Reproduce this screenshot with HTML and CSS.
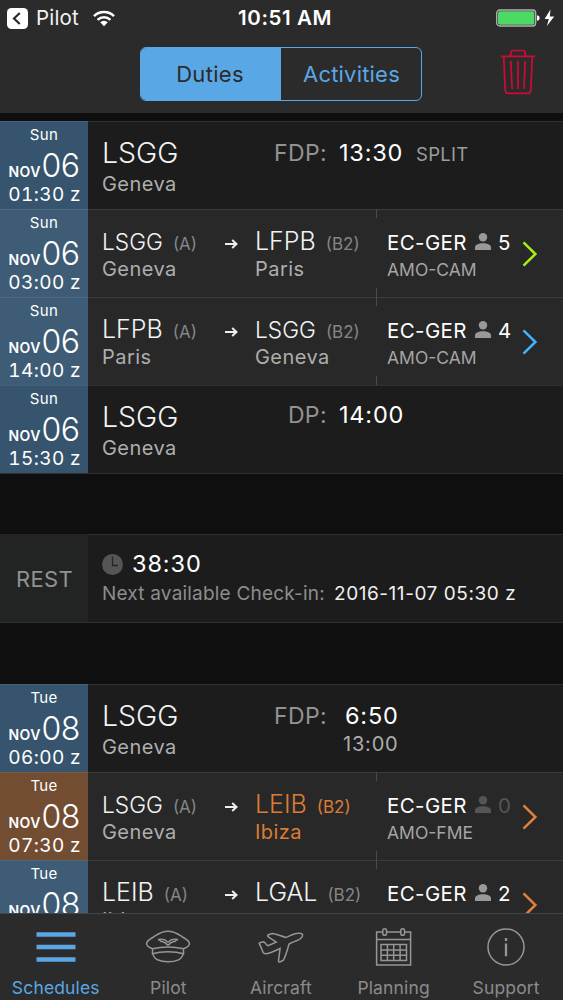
FILE: index.html
```html
<!DOCTYPE html>
<html lang="en">
<head>
<meta charset="utf-8">
<title>Duties</title>
<link rel="stylesheet" href="styles.css">
</head>
<body>
<svg class="defs" width="0" height="0">
  <symbol id="person" viewBox="0 0 16 17"><circle cx="8" cy="4.3" r="4.2"/><path d="M0 17v-2.600C0 11.600 4.500 10.300 8 10.300s8 1.300 8 4.100V17z"/></symbol>
  <symbol id="arrow" viewBox="0 0 13 10"><path d="M0 5h11M7.200 1l4.300 4-4.300 4" fill="none" stroke="currentColor" stroke-width="2"/></symbol>
  <symbol id="chevron" viewBox="0 0 16 26"><path d="M1.500 1.300 13.400 13 1.500 24.700" fill="none" stroke="currentColor" stroke-width="2.500"/></symbol>
</svg>
<div class="app">
  <header class="top">
    <div class="status">
      <div class="status-left">
        <svg class="back" width="21" height="21" viewBox="0 0 21 21"><rect width="21" height="21" rx="4.500" fill="#fff"/><path d="M12.800 5 7 10.500l5.800 5.500" fill="none" stroke="#2b2b2b" stroke-width="2.200"/></svg>
        <span class="back-label">Pilot</span>
        <svg class="wifi" width="22" height="17" viewBox="0 0 22 17"><g fill="none" stroke="#fff" stroke-width="2.500"><path d="M1 6.200a14.200 14.200 0 0 1 20 0"/><path d="M4.600 9.900a9.100 9.100 0 0 1 12.800 0"/></g><path d="M7.200 12.300a5.400 5.400 0 0 1 7.600 0L11 16.300z" fill="#fff"/></svg>
      </div>
      <div class="clock">10:51 AM</div>
      <svg class="battery" width="60" height="20" viewBox="0 0 60 20"><rect x=".7" y="2" width="39" height="16" rx="3" fill="none" stroke="#b5b0b5" stroke-width="1.300"/><rect x="2" y="3.300" width="36.400" height="13.400" rx="1.800" fill="#4cd964"/><path d="M41 7.200c2 .3 2.600 1.500 2.600 2.800s-.6 2.500-2.600 2.800z" fill="#fff"/><path d="M54.500 1.500 48.600 11h4.200l-1.900 7L58.200 8.400h-4.400z" fill="#fff"/></svg>
    </div>
    <div class="toolbar">
      <div class="segmented"><div class="segment active">Duties</div><div class="segment">Activities</div></div>
      <svg class="trash" width="34" height="46" viewBox="0 0 34 46" fill="none" stroke="#d00a35" stroke-width="1.700"><path d="M0 7.300h34M9.700 7V4.500c0-2 1-3 3-3h8.600c2 0 3 1 3 3V7M2.700 7.500l1.500 33.700c.1 2.100 1.200 3.200 3.200 3.200h19.200c2 0 3.100-1.100 3.200-3.200L31.300 7.500"/><path d="M9.800 12l1.300 28M17 12v28M24.200 12l-1.300 28"/></svg>
    </div>
  </header>

  <main class="list">
    <section class="group">
      <article class="row duty">
        <div class="date"><div class="day">Sun</div><div class="md"><b>NOV</b><span>06</span></div><div class="time">01:30 z</div></div>
        <div class="station"><div class="icao">LSGG</div><div class="city">Geneva</div></div>
        <div class="period"><div class="period-line"><span class="label">FDP:</span><span class="value">13:30</span><span class="split">SPLIT</span></div></div>
      </article>
      <article class="row leg">
        <div class="date"><div class="day">Sun</div><div class="md"><b>NOV</b><span>06</span></div><div class="time">03:00 z</div></div>
        <div class="from"><div class="code"><span class="icao small">LSGG</span><span class="blk">(A)</span></div><div class="city">Geneva</div></div>
        <svg class="arrow" width="13" height="10"><use href="#arrow"/></svg>
        <div class="to"><div class="code"><span class="icao">LFPB</span><span class="blk">(B2)</span></div><div class="city">Paris</div></div>
        <div class="craft"><div class="reg"><span class="tail">EC-GER</span><svg class="person" width="16" height="17"><use href="#person"/></svg><span class="pax">5</span></div><div class="type">AMO-CAM</div></div>
        <svg class="chev green" width="16" height="26"><use href="#chevron"/></svg>
      </article>
      <article class="row leg">
        <div class="date"><div class="day">Sun</div><div class="md"><b>NOV</b><span>06</span></div><div class="time">14:00 z</div></div>
        <div class="from"><div class="code"><span class="icao">LFPB</span><span class="blk">(A)</span></div><div class="city">Paris</div></div>
        <svg class="arrow" width="13" height="10"><use href="#arrow"/></svg>
        <div class="to"><div class="code"><span class="icao small">LSGG</span><span class="blk">(B2)</span></div><div class="city">Geneva</div></div>
        <div class="craft"><div class="reg"><span class="tail">EC-GER</span><svg class="person" width="16" height="17"><use href="#person"/></svg><span class="pax">4</span></div><div class="type">AMO-CAM</div></div>
        <svg class="chev blue" width="16" height="26"><use href="#chevron"/></svg>
      </article>
      <article class="row duty">
        <div class="date"><div class="day">Sun</div><div class="md"><b>NOV</b><span>06</span></div><div class="time">15:30 z</div></div>
        <div class="station"><div class="icao">LSGG</div><div class="city">Geneva</div></div>
        <div class="period closing"><div class="period-line"><span class="label">DP:</span><span class="value">14:00</span></div></div>
      </article>
    </section>

    <section class="group">
      <article class="row rest">
        <div class="rest-tag">REST</div>
        <div class="rest-body">
          <div class="rest-time"><svg width="21" height="21" viewBox="0 0 21 21"><circle cx="10.500" cy="10.500" r="10.500" fill="#555"/><path d="M10.500 2.500v9H16" fill="none" stroke="#252525" stroke-width="1.300"/></svg><span>38:30</span></div>
          <div class="rest-next"><span class="next-label">Next available Check-in:</span><span class="next-value">2016-11-07 05:30 z</span></div>
        </div>
      </article>
    </section>

    <section class="group">
      <article class="row duty">
        <div class="date"><div class="day">Tue</div><div class="md"><b>NOV</b><span>08</span></div><div class="time">06:00 z</div></div>
        <div class="station"><div class="icao">LSGG</div><div class="city">Geneva</div></div>
        <div class="period"><div class="period-line"><span class="label">FDP:</span><span class="value short">6:50</span></div><div class="limit">13:00</div></div>
      </article>
      <article class="row leg alert">
        <div class="date"><div class="day">Tue</div><div class="md"><b>NOV</b><span>08</span></div><div class="time">07:30 z</div></div>
        <div class="from"><div class="code"><span class="icao small">LSGG</span><span class="blk">(A)</span></div><div class="city">Geneva</div></div>
        <svg class="arrow" width="13" height="10"><use href="#arrow"/></svg>
        <div class="to changed"><div class="code"><span class="icao">LEIB</span><span class="blk">(B2)</span></div><div class="city">Ibiza</div></div>
        <div class="craft"><div class="reg"><span class="tail">EC-GER</span><svg class="person empty" width="16" height="17"><use href="#person"/></svg><span class="pax empty">0</span></div><div class="type">AMO-FME</div></div>
        <svg class="chev orange" width="16" height="26"><use href="#chevron"/></svg>
      </article>
      <article class="row leg">
        <div class="date"><div class="day">Tue</div><div class="md"><b>NOV</b><span>08</span></div></div>
        <div class="from"><div class="code"><span class="icao">LEIB</span><span class="blk">(A)</span></div><div class="city">Ibiza</div></div>
        <svg class="arrow" width="13" height="10"><use href="#arrow"/></svg>
        <div class="to"><div class="code"><span class="icao">LGAL</span><span class="blk">(B2)</span></div></div>
        <div class="craft"><div class="reg"><span class="tail">EC-GER</span><svg class="person" width="16" height="17"><use href="#person"/></svg><span class="pax">2</span></div></div>
        <svg class="chev orange" width="16" height="26"><use href="#chevron"/></svg>
      </article>
    </section>
  </main>

  <nav class="tabs">
    <div class="tab selected"><svg width="46" height="40" viewBox="0 0 46 40"><path d="M3.500 6.500h39M3.500 19h39M3.500 31.500h39" stroke="#5aa7e6" stroke-width="4.600"/></svg><span>Schedules</span></div>
    <div class="tab"><svg width="46" height="40" viewBox="0 0 46 40"><path d="M7.500 20.800C4 19.500 1.600 17.800 1.600 15.500 1.600 13.500 5 11 8.500 9 12.500 6.500 16 3.200 23 3.200S33.500 6.500 37.500 9c3.500 2 6.900 4.500 6.900 6.500 0 2.300-2.400 4-5.900 5.300M7.500 20.800c9-2.200 22-2.200 31 0v5c-9-2.600-22-2.600-31 0zM8 26c.5 3 2 4.600 4.500 5.800 5.500 2.700 15.500 2.700 21 0 2.500-1.200 4-2.800 4.500-5.800"/><path d="M13 11.500c3-.4 6.500-.8 8 1.400.5.900 1 1.100 2 1.100s1.500-.2 2-1.100c1.500-2.200 5-1.800 8-1.400-1.700.3-2.300 1-3 2h-2c-.7.600-1 1.200-2 1.200-.8 0-1.300 2-3 2.300-1.700-.3-2.200-2.300-3-2.300-1 0-1.300-.6-2-1.200h-2c-.7-1-1.300-1.700-3-2z"/></svg><span>Pilot</span></div>
    <div class="tab"><svg width="46" height="40" viewBox="0 0 46 40"><path d="M1.700 14.800l3.800-1c2 .8 2.800 3.700 4.500 3.900l8.200-3.600-8.200-5.500c-.7-.6-.4-1.500.5-1.900l3.500-1.200c4 .3 8.500 2.500 14 3.900 4.500-1.800 8-4 12-4.200 2.500-.2 4.400.5 4.600 1.600.3 2.600-3 4.600-6.200 5.900-3 1.200-5.300 2.100-7.300 3.300-1.600 4.700-2.700 10.700-5.700 16.200l-3.500 1.800c-1.200.2-1.600-.4-1.400-1.400l1.600-12.100c-5 2.200-9.300 4.400-13.600 5.200-1.600.2-2.800-.1-3.400-1.300C4 22 3 18.600 1.400 16c-.3-.6-.2-1 .3-1.200z"/></svg><span>Aircraft</span></div>
    <div class="tab"><svg width="46" height="40" viewBox="0 0 46 40"><path d="M11.800 4H5.600v33h34V4h-6.200M15.500 4h14.300M5.600 11.500h34"/><rect x="11.800" y=".8" width="3.700" height="6.400" rx="1.800"/><rect x="29.800" y=".8" width="3.700" height="6.400" rx="1.800"/><path d="M10 16.500h25.500v16H10zM10 22h25.500M10 27.200h25.500M16.400 16.500v16M22.700 16.500v16M29.100 16.500v16"/></svg><span>Planning</span></div>
    <div class="tab"><svg width="46" height="40" viewBox="0 0 46 40"><circle cx="23" cy="19" r="18"/><path d="M23 15.500v12.800M23 10v3" stroke-width="2.300"/></svg><span>Support</span></div>
  </nav>
</div>
</body>
</html>
```
FILE: styles.css
```css
* { box-sizing: border-box; }
body { margin: 0; background: #0f0f0f; color: #f2f2f2; font-family: Inter, "Liberation Sans", sans-serif; }
.defs { display: block; height: 0; }
.app { width: 563px; height: 1000px; display: flex; flex-direction: column; overflow: hidden; white-space: nowrap; }
svg { display: block; flex: none; }

.top { height: 113px; flex: none; background: #2b2b2b; }
.status { height: 36px; display: grid; grid-template-columns: 238px 1fr 67px; align-items: center; }
.status-left { display: flex; align-items: center; padding-left: 7px; }
.back-label { width: 50px; margin-left: 8px; font-size: 20.500px; letter-spacing: .2px; line-height: 36px; }
.wifi { margin-left: 7px; }
.clock { font-size: 20.500px; font-weight: 600; line-height: 36px; letter-spacing: .6px; color: #fff; }
.toolbar { display: flex; padding: 11px 28px 0 140px; justify-content: space-between; }
.segmented { width: 282px; height: 54px; display: grid; grid-template-columns: 1fr 1fr; border: 1.500px solid #5aa7e6; border-radius: 6px; overflow: hidden; }
.segment { text-align: center; line-height: 52px; font-size: 22px; letter-spacing: .2px; color: #5aa7e6; padding-left: 1px; }
.segment.active { background: #5aa7e6; color: #2b2b2b; padding: 0 2px 0 0; letter-spacing: .3px; }
.trash { margin-top: 2px; }

.list { flex: 1; min-height: 0; overflow: hidden; padding-top: 8px; display: flex; flex-direction: column; }
.group { flex: none; margin-bottom: 61px; }
.group:first-child { margin-bottom: 60px; }
.row { height: 88px; display: grid; background: #1c1c1c; box-shadow: inset 0 1px #303030; }
.group .row:last-child { border-bottom: 1px solid #303030; height: 89px; }
.duty { grid-template-columns: 88px 150px 1fr; }
.leg { grid-template-columns: 88px 137px 30px 121px 147px 1fr; background: #282828; box-shadow: inset 0 1px #3b3b3b; }

.date { background: #36546d; text-align: center; color: #fff; box-shadow: inset 0 1px rgba(255,255,255,.08); }
.leg .date { background: #3e5c75; }
.alert .date { background: #724d32; }
.day { height: 27px; line-height: 27px; font-size: 15px; letter-spacing: .3px; }
.md { height: 34px; display: flex; align-items: baseline; padding-left: 8px; line-height: 35px; }
.md b { font-size: 14px; font-weight: 600; width: 33.500px; letter-spacing: .5px; }
.md span { font-size: 32px; font-weight: 300; letter-spacing: -.5px; }
.time { line-height: 25px; font-size: 19px; font-variant-numeric: tabular-nums; text-align: right; padding-right: 7px; letter-spacing: .4px; }

.station { padding: 16px 0 0 14px; }
.station .icao { font-size: 28.500px; font-weight: 300; line-height: 31px; }
.city { font-size: 20px; line-height: 32px; letter-spacing: .45px; color: #aeaeae; }
.period { padding: 16px 0 0 34px; }
.period.closing { padding-top: 14px; }
.period-line { display: flex; align-items: baseline; line-height: 32px; }
.label { width: 55px; text-align: right; font-size: 23px; letter-spacing: .4px; color: #929292; }
.value { margin-left: 12px; width: 76px; font-size: 23.500px; font-weight: 400; letter-spacing: .8px; color: #fff; }
.value.short { padding-left: 6px; }
.split { margin-left: 1px; font-size: 18.500px; letter-spacing: .3px; color: #9d9d9d; }
.limit { margin-left: 71px; font-size: 20px; line-height: 25px; letter-spacing: .8px; color: #adadad; }

.from { padding: 18px 0 0 14px; }
.to { padding-top: 18px; }
.code { height: 29px; line-height: 29px; display: flex; align-items: baseline; }
.code .icao { font-size: 25px; font-weight: 300; }
.code .icao.small { font-size: 22.700px; }
.blk { margin-left: 10px; font-size: 17px; color: #858585; }
.leg .city { line-height: 26px; }
.arrow { margin-top: 30px; color: #eee; }
.changed .icao, .changed .city, .changed .blk { color: #dc7c36; }
.craft { padding: 19px 0 0 11px; background: linear-gradient(#4b4b4b, #4b4b4b) 0 0 / 1px 9px no-repeat, linear-gradient(#4b4b4b, #4b4b4b) 0 100% / 1px 9px no-repeat; }
.reg { display: flex; height: 29px; line-height: 29px; font-size: 20.500px; }
.tail { width: 88px; font-weight: 400; letter-spacing: .4px; color: #fff; }
.person { margin-top: 5px; fill: #999; }
.pax { margin-left: 7px; color: #fff; }
.person.empty { fill: #555; }
.pax.empty { color: #555; }
.type { line-height: 25px; font-size: 17.500px; color: #a5a5a5; }
.chev { margin-top: 31.500px; margin-left: -1px; }
.green { color: #a7ef13; }
.blue { color: #41b3fb; }
.orange { color: #e1813a; }

.rest { grid-template-columns: 88px 1fr; }
.rest-tag { background: #222423; color: #929292; text-align: center; font-size: 22px; letter-spacing: .3px; line-height: 88px; padding: 1px 0 0 1px; height: 88px; }
.rest-body { padding: 15px 0 0 14px; }
.rest-time { display: flex; align-items: center; gap: 9px; font-size: 23.500px; font-weight: 400; letter-spacing: .9px; line-height: 30px; color: #fff; }
.rest-next { display: flex; font-size: 19px; line-height: 29px; }
.next-label { width: 232px; letter-spacing: .2px; color: #8d8d8d; }
.next-value { letter-spacing: .55px; color: #f0f0f0; }

.tabs { height: 87px; flex: none; display: grid; grid-template-columns: repeat(5, 1fr); background: #2b2b2b; border-top: 1px solid #444; }
.tab { display: flex; flex-direction: column; align-items: center; padding: 14px 1px 0 0; color: #8b8b8b; font-size: 17.500px; letter-spacing: .15px; }
.tab svg { fill: none; stroke: #969696; stroke-width: 1.500; }
.tab span { line-height: 39px; }
.tab.selected { color: #5aa7e6; }
```
